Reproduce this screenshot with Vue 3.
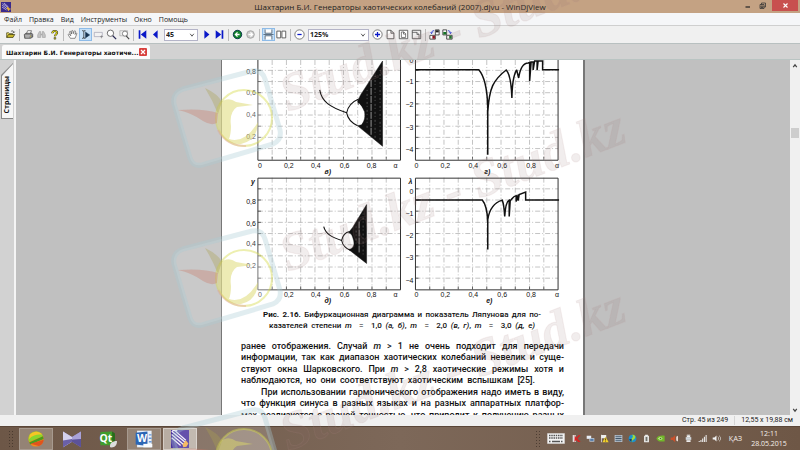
<script setup>
import { ref } from 'vue'

const page = ref('45')
const zoom = ref('125%')
const menus = ['Файл', 'Правка', 'Вид', 'Инструменты', 'Окно', 'Помощь']

// Each icon is a list of [path, fill, stroke, stroke width] on a 26 × 26 grid.
const blue = '#0a18c8'
const ink = '#444'
const icons = {
  open: [
    ['M4 20V9h5l2 2h7v4', '#f3e36a', '#33310a', 1.6],
    ['M4 20l4-7h15l-4 7z', '#c9b82c', '#33310a', 1.6],
    ['M14 6c3-3 6-2 7 2M21 9l-3-2M21 9l2-3', 'none', '#222', 1.4],
  ],
  print: [
    ['M8 12l3-8h9l-3 8', '#fff', '#333', 1.4],
    ['M3 13l4-3h14l2 3v6l-5 3H4z', '#888', '#333', 1.5],
    ['M5 16h12M6 19h9M11 7h6', 'none', '#eee', 1.3],
    ['M17 17h2', 'none', '#dccb23', 2],
  ],
  find: [
    ['M4 20v-6l4-8h3v14zM15 20V6h3l4 8v6z', '#c4c4c4', '#a2a2a2', 1.5],
    ['M11 11h4v4h-4z', '#aaa', 'none', 0],
  ],
  help: [
    ['M8 10c0-7 11-7 11-1 0 4-5 4-5 8', 'none', '#222', 5],
    ['M8 10c0-7 11-7 11-1 0 4-5 4-5 8', 'none', '#e4dc18', 2.6],
    ['M12 20h4v4h-4z', '#d8ce10', '#222', 1.2],
  ],
  hand: [
    ['M8 22l-5-8c-1-2 2-3 3-1l3 3-3-9c0-2 3-2 3 0l2 5V5c0-2 3-2 3 0l1 6 2-6c1-2 3-1 3 1l-1 7 2-3c1-1 3 0 2 2l-4 10z', '#fff', '#444', 1.4],
  ],
  text: [
    ['M5 4h3l1 2 1-2h3M9 6v15M5 22h3l1-2 1 2h3', 'none', '#222', 1.7],
    ['M13 7l10 7-10 7z', '#16324f', '#16324f', 1],
  ],
  marquee: [
    ['M3 8h19v10H3z', '#f2f2f2', '#9a9aac', 1.5],
    ['M20 15v7M17 18h7', 'none', '#777', 1.4],
  ],
  loupe: [
    ['M18 10a7.500 7.500 0 1 1-15 0a7.500 7.500 0 1 1 15 0', '#fff', '#444', 1.8],
    ['M16 16l8 8', 'none', '#2a2a55', 3],
  ],
  loupeArea: [
    ['M2 4h18v12H2z', '#eee', '#999', 1.4],
    ['M20 11a6 6 0 1 1-12 0a6 6 0 1 1 12 0', '#fff', '#555', 1.6],
    ['M17 16l7 8', 'none', '#444', 2.6],
  ],
  first: [['M4 3h4v20H4zM22 3v20L9 13z', blue, 'none', 0]],
  prev: [['M18 3v20L7 13z', blue, 'none', 0]],
  next: [['M8 3v20l12-10z', blue, 'none', 0]],
  last: [['M18 3h4v20h-4zM4 3v20l13-10z', blue, 'none', 0]],
  back: [
    ['M23 13a10 10 0 1 1-20 0a10 10 0 1 1 20 0', '#11832c', '#08304a', 2.2],
    ['M18 13H9M13 8l-5 5 5 5', 'none', '#fff', 3],
  ],
  forward: [
    ['M22 13a9 9 0 1 1-18 0a9 9 0 1 1 18 0', '#c9c9c9', '#a0a0a0', 2],
    ['M8 13h9M13 8l5 5-5 5', 'none', '#fff', 3],
  ],
  continuous: [['M5 1v9h16V1M5 25v-9h16v9M1 13h24', '#fff', '#456', 1.9]],
  facing: [['M2 5h9v16H2zM14 5h9v16h-9z', '#fff', ink, 1.9]],
  minus: [
    ['M24 13a11 11 0 1 1-22 0a11 11 0 1 1 22 0', '#fff', ink, 1.6],
    ['M8 13h10', 'none', blue, 3],
  ],
  plus: [
    ['M24 13a11 11 0 1 1-22 0a11 11 0 1 1 22 0', '#fff', ink, 1.6],
    ['M7 13h12M13 7v12', 'none', blue, 3],
  ],
  sheet: [['M5 3h9l7 7v13H5zM14 3v7h7', '#fff', ink, 1.9]],
  fitWidth: [
    ['M3 3h20v20H3z', '#fff', ink, 1.9],
    ['M8 7h6l4 4v9H8zM13 7v5h5', 'none', ink, 1.6],
  ],
  fitPage: [
    ['M3 3h20v20H3z', '#eee', ink, 1.9],
    ['M3 8h11l5 5v10M14 8v5h5', 'none', ink, 1.6],
  ],
  rotateLeft: [
    ['M15 2h9v12h-9z', '#fff', '#222', 1.8],
    ['M16 3h7v5h-7z', '#222', 'none', 0],
    ['M2 15h13v9H2z', '#fff', '#222', 1.8],
    ['M8 16h6v7H8z', '#8c1420', 'none', 0],
    ['M12 4c-4 0-6 2-6 6M3 8l3 3 3-3', 'none', blue, 1.8],
  ],
  rotateRight: [
    ['M2 2h9v12H2z', '#fff', '#222', 1.8],
    ['M3 7h7v6H3z', '#157425', 'none', 0],
    ['M11 15h13v9H11z', '#fff', '#222', 1.8],
    ['M17 16h6v7h-6z', '#157425', 'none', 0],
    ['M14 4c4 0 6 2 6 6M17 8l3 3 3-3', 'none', blue, 1.8],
  ],
}

const tools = [
  ['open', 'Открыть'], ['|'],
  ['print', 'Печать'], ['find', 'Найти'], ['help', 'Справка'], ['|'],
  ['hand', 'Рука'], ['text', 'Выделение текста', true], ['marquee', 'Выделение области'],
  ['loupe', 'Лупа'], ['loupeArea', 'Увеличить область'], ['|'],
  ['first', 'Первая страница'], ['prev', 'Предыдущая страница'], ['page'],
  ['next', 'Следующая страница'], ['last', 'Последняя страница'], ['|'],
  ['back', 'Назад'], ['forward', 'Вперёд'], ['|'],
  ['continuous', 'Непрерывно', true], ['facing', 'Разворот'], ['|'],
  ['minus', 'Уменьшить'], ['zoom'], ['plus', 'Увеличить'],
  ['sheet', 'Реальный размер'], ['fitWidth', 'По ширине'], ['fitPage', 'По странице'], ['|'],
  ['rotateLeft', 'Повернуть влево'], ['rotateRight', 'Повернуть вправо'],
].map(([id, label, active]) => ({ id, label, active }))

const range = (n) => Array.from({ length: n }, (_, i) => i + 1)

const leftX = [['0', 2], ['0,2', 31], ['0,4', 58], ['0,6', 87], ['0,8', 114], ['α', 138]]
const rightX = [['0', 1], ['0,2', 30], ['0,4', 58], ['0,6', 87], ['0,8', 116], ['α', 142]]
const charts = [
  { x: 257, top: 50, bottom: 160, name: 'в)', nameX: 327, xLabels: leftX, yLabels: [['0,8', 72], ['0,6', 93], ['0,4', 115], ['0,2', 137]], axis: '' },
  { x: 415, top: 50, bottom: 160, name: 'г)', nameX: 487, xLabels: rightX, yLabels: [['0', 61], ['−1', 82], ['−2', 105], ['−3', 128], ['−4', 150]], axis: '' },
  { x: 257, top: 178, bottom: 290, name: 'д)', nameX: 327, xLabels: leftX, yLabels: [['0,8', 202], ['0,6', 224], ['0,4', 245], ['0,2', 267]], axis: 'y' },
  { x: 415, top: 178, bottom: 290, name: 'е)', nameX: 489, xLabels: rightX, yLabels: [['0', 192], ['−1', 214], ['−2', 237], ['−3', 259], ['−4', 282]], axis: 'λ' },
]

const prose = [
  ['ранее отображения.  Случай ', 'm', ' > 1 не очень подходит для передачи'],
  ['информации, так как диапазон хаотических колебаний невелик и суще-'],
  ['ствуют окна Шарковского.  При ', 'm', ' > 2,8 хаотические режимы хотя и'],
  ['наблюдаются, но они соответствуют хаотическим вспышкам [25].'],
  ['При использовании гармонического отображения надо иметь в виду,'],
  ['что функция синуса в разных языках и на разных аппаратных платфор-'],
  ['мах реализуется с разной точностью, что приводит к получению разных'],
]

const apps = [
  { name: 'Браузер', state: 'open', shapes: [
    ['M24 13a11 11 0 1 1-22 0a11 11 0 1 1 22 0', '#f58a1b'],
    ['M2 13C2 6 7 2 13 2c5 0 9 3 10 7L3 17z', '#8bd62d'],
    ['M4 7c5-6 14-6 18 0C16 6 9 7 3 13z', '#f7c526'],
    ['M3 18l20-9 1 4L5 21z', '#4a9a1e'],
    ['M5 20l19-6c0 4-3 8-7 9z', '#e0531c'],
  ] },
  { name: 'Плеер', state: '', shapes: [
    ['M0 2l13 8 13-8v23l-13-8-13 8z', '#8d86c4'],
    ['M0 2l13 8v7L0 25z', '#d4d1ee'],
    ['M0 25V15l13-2v4z', '#6a60a8'],
    ['M26 2v11l-13 1v-4z', '#a9a2d8'],
    ['M26 25V13l-13 1v3z', '#5c5298'],
  ] },
  { name: 'Qt Creator', state: '', text: 'Qt', shapes: [
    ['M2 3l17-1v20H2z', '#3f9d2c'], ['M19 2l4 3v16l-4 1z', '#256e1a'],
    ['M16 25c-1-6 3-9 10-9 0 7-4 10-10 9z', '#ddd'], ['M13 27l8-7', '#aaa'],
  ] },
  { name: 'Word', state: 'open', text: 'W', shapes: [
    ['M3 1h21v24H3z', '#e9f1fb'], ['M1 4l17-2v21L1 21z', '#2b66b5'],
    ['M20 6h4v2h-4zM20 11h4v2h-4zM20 16h4v2h-4z', '#6d9bd6'], ['M12 20h13v5H12z', '#f8fbff'],
  ] },
  { name: 'WinDjView', state: 'current', shapes: [] },
]

const tray = [
  [['M2 3h9v20H2z', '#e0e0e0'], ['M8 3l4 8 8-8h5L16 13l9 10h-7l-6-6-5 6z', '#d52222']],
  [['M2 5h13v9H2z', '#e8eef5'], ['M10 12h14v10H10z', '#c4d3e5'], ['M12 14h10v6H12z', '#557ba6']],
  [['M3 2h2v22H3zM5 3h13v9H5z', '#eee'], ['M16 8l9 16H7z', '#f2cf2a'], ['M15 13h2v6h-2zM15 20h2v2h-2z', '#222']],
  [['M2 3h22v20H2z', '#c7d2dd'], ['M4 5h18v3H4zM4 11h18v4H4zM4 18h18v3H4z', '#43576a']],
  [['M24 13a11 11 0 1 1-22 0a11 11 0 1 1 22 0', '#1c91cf'], ['M12 2c8 0 11 5 8 10s-9 4-8 12c-5-5-5-9-1-12s4-6 1-10z', '#a3da37'], ['M3 16l8-2-1 9z', '#0c3970']],
  [['M9 2h8v3h3v19H6V5h3z', '#eee'], ['M9 8h8v13H9z', '#b0b0a8'], ['M12 9h2v11h-2z', '#555']],
  [['M1 13C6 4 15 4 25 5v17H11C7 21 3 18 1 13z', '#73b72b'], ['M6 13c4-5 9-5 13 0-4 5-9 5-13 0z', '#d8f0b4'], ['M10 13c2-3 5-3 6 0-2 3-4 3-6 0z', '#42820f']],
  [['M2 10h6l7-7v21l-7-7H2z', '#c9502a'], ['M18 8l5-3v17l-5-3z', '#eee0d8']],
  [['M8 2h10v7H8z', '#eee'], ['M5 9h16v8H5z', '#cfd5da'], ['M7 18h12v5H7z', '#f4f4f4'], ['M10 4h2v2h-2zM14 4h2v2h-2z', '#555']],
  [['M2 20h3v3H2zM7 17h3v6H7zM12 13h3v10h-3zM17 8h3v15h-3zM22 3h3v20h-3z', '#eee']],
  [['M2 10h5l6-6v18l-6-6H2z', '#f2f2f2'], ['M16 8c3 3 3 7 0 10l1 1c4-4 4-8 0-12zM20 5c5 5 5 11 0 16l1 1c6-6 6-12 0-18z', '#eee']],
]

const marks = [
  { text: 112, badge: 0 },
  { text: 272, badge: 160 },
  { text: 451, badge: 339 },
]
</script>

<template>
  <div class="window">
    <header class="titlebar">
      <svg class="logo" viewBox="0 0 20 20" aria-hidden="true">
        <path d="M0 0h20v20H0z" fill="#3b2a8c" />
        <path d="M3 3l11 8M2 6l11 8M6 2l9 8M2 10l9 6" stroke="#e6e0ff" stroke-width="1.300" />
        <path d="M12 13l2-3 1 3 4 1-3 1-1 3-1-3z" fill="#ffc22b" stroke="#ffc22b" />
      </svg>
      <h1>Шахтарин Б.И. Генераторы хаотических колебаний (2007).djvu - WinDjView</h1>
      <div class="caption-buttons">
        <button aria-label="Свернуть"><svg viewBox="0 0 14 14"><path d="M3 10h9" stroke="#222" stroke-width="2.400" /></svg></button>
        <button aria-label="Восстановить"><svg viewBox="0 0 14 14"><path d="M2 5h8v8H2zM5 5V2h8v8h-3M4 8h4v3H4z" fill="none" stroke="#333" stroke-width="1.500" /></svg></button>
        <button class="close" aria-label="Закрыть"><svg viewBox="0 0 14 14"><path d="M3 3l8 8M11 3l-8 8" stroke="#fff" stroke-width="2.200" /></svg></button>
      </div>
    </header>

    <nav class="menubar">
      <button v-for="m in menus" :key="m">{{ m }}</button>
    </nav>

    <div class="toolbar">
      <template v-for="(t, i) in tools" :key="i">
        <span v-if="t.id === '|'" class="sep"></span>
        <span v-else-if="t.id === 'page'" class="combo page-combo">
          <select v-model="page" aria-label="Страница"><option>45</option><option>46</option></select>
          <svg viewBox="0 0 10 10"><path d="M2 3l3 4 3-4" fill="none" stroke="#555" stroke-width="1.600" /></svg>
        </span>
        <span v-else-if="t.id === 'zoom'" class="combo zoom-combo">
          <select v-model="zoom" aria-label="Масштаб"><option>125%</option><option>150%</option></select>
          <svg viewBox="0 0 10 10"><path d="M2 3l3 4 3-4" fill="none" stroke="#555" stroke-width="1.600" /></svg>
        </span>
        <button v-else class="tool" :class="{ active: t.active }" :aria-label="t.label">
          <svg viewBox="0 0 26 26">
            <path v-for="(p, k) in icons[t.id]" :key="k" :d="p[0]" :fill="p[1]" :stroke="p[2]" :stroke-width="p[3]" />
          </svg>
        </button>
      </template>
    </div>

    <div class="tabs">
      <div class="tab">
        <button class="tab-name">Шахтарин Б.И. Генераторы хаотиче...</button>
        <button class="tab-close" aria-label="Закрыть вкладку"><svg viewBox="0 0 16 16"><path d="M4 4l8 8M12 4l-8 8" stroke="#fff" stroke-width="2.400" /></svg></button>
      </div>
    </div>

    <main class="workspace">
      <aside class="side">
        <button class="side-tab"><span>Страницы</span></button>
      </aside>
      <div class="viewer">
        <article class="sheet">
          <svg class="figure" viewBox="221 60 362 247" role="img" aria-label="Бифуркационные диаграммы">
            <g v-for="(c, i) in charts" :key="i">
              <g class="grid">
                <path v-for="n in 9" :key="'v' + n" :d="`M${c.x + n * 14.3} ${c.top}V${c.bottom}`" />
                <path v-for="n in 9" :key="'h' + n" :d="`M${c.x} ${c.bottom - n * 11.2}h143`" />
              </g>
              <path class="frame" :d="`M${c.x} ${c.top + 0.5}h143V${c.bottom + 0.5}h-143z`" />
              <path class="ticks" :d="range(9).map(n => `M${c.x + n * 14.3} ${c.bottom}v-3M${c.x} ${c.bottom - n * 11.2}h3`).join('')" />
              <text v-for="l in c.yLabels" :key="l[0]" :x="c.x - 2" :y="l[1] + 2" text-anchor="end">{{ l[0] }}</text>
              <text v-for="l in c.xLabels" :key="l[0]" :x="c.x + l[1]" :y="c.bottom + 8" text-anchor="middle">{{ l[0] }}</text>
              <text class="italic" :x="c.nameX" :y="c.bottom + 14" text-anchor="middle">{{ c.name }}</text>
              <text v-if="c.axis" class="italic" :x="c.x - 5" :y="c.top + 6" text-anchor="middle">{{ c.axis }}</text>
            </g>

            <g class="curve">
              <path d="M319 90c2 12 10 17 27 23M358 99c-7 3-11 8-12 14 1 6 5 10 11 13" />
              <path class="solid" d="M357 101l3-6 22-34v85.500l-25-20.500 4-1c2-3 4-6 3-13-2-4-3-6-6-7z" />
              <path class="hole" d="M358 103c3 2 5 8 5 12s-2 7-5 9" />
              <path class="streak" d="M370.500 80v55" />
              <path class="grain" d="M374.500 76v62M379.500 70v70M366.500 90v38" />

              <path d="M323 227c2 8 9 11 18 14M349 232c-5 1-7 4-8 9 1 5 4 8 9 10" />
              <path class="solid" d="M348 233l4-5 14-23v59l-18-14c5-1 6-5 5-9-1-4-2-7-5-8z" />
              <path class="streak" d="M358.500 222v32" />
              <path class="grain" d="M362.500 214v44M355.500 227v20" />

              <path class="trace" d="M415 69.700H478.500C484 76 487 86 487.500 108V155V112C489 88 493 80 506 70 509 73 511 80 511.700 98 512 82 514 74 516.500 70L518.500 78C520 68 523 63 528 63L529.500 62.500V81L531 62H533V70L534.500 61H537V70L538 61H542.500V69.700H559" />
              <path class="trace" d="M415 200.500H482C485 204 487 210 487.500 222V250V220C489 210 494 203 502 200.500 503 203 504 208 504.500 217 505 208 506 202 509 200.500V217L510 201C512 200 512 197 516 196V202L518 195V201L519 195 525.500 192.500V200.500H559" />
            </g>
          </svg>

          <div class="fig-caption">
            <p><b>Рис. 2.16.</b> Бифуркационная диаграмма и показатель Ляпунова для по-</p>
            <p class="second">казателей степени <i>m</i> &nbsp;=&nbsp; 1,0 <i>(а, б)</i>, <i>m</i> &nbsp;=&nbsp; 2,0 <i>(в, г)</i>, <i>m</i> &nbsp;=&nbsp; 3,0 <i>(д, е)</i></p>
          </div>

          <div class="prose">
            <p v-for="(line, i) in prose" :key="i" :class="{ end: i === 3, indent: i === 4 }">
              <template v-for="(part, k) in line" :key="k"><i v-if="part === 'm'">m</i><template v-else>{{ part }}</template></template>
            </p>
          </div>
        </article>
      </div>
      <div class="scrollbar">
        <button aria-label="Вверх"><svg viewBox="0 0 10 10"><path d="M2 7l3-4 3 4" fill="none" stroke="#444" stroke-width="2" /></svg></button>
        <span class="thumb"></span>
        <button aria-label="Вниз"><svg viewBox="0 0 10 10"><path d="M2 3l3 4 3-4" fill="none" stroke="#444" stroke-width="2" /></svg></button>
      </div>
    </main>

    <footer class="status">
      <span>Стр. 45 из 249</span>
      <span class="size">12,55 x 19,88 см</span>
    </footer>

    <div class="taskbar">
      <span class="grip"></span>
      <div class="apps">
        <button v-for="a in apps" :key="a.name" :class="a.state" :aria-label="a.name">
          <svg v-if="a.state === 'current'" viewBox="0 0 28 28">
            <path d="M0 0h28v28H0z" fill="#4a329e" />
            <path d="M1 2l21 17M1 7l18 15M1 12l14 12M6 1l17 15M2 1l8 0" stroke="#f2effc" stroke-width="2" />
            <path d="M18 22l5-6 4 5-3 5-5 1z" fill="#f5b04a" />
          </svg>
          <svg v-else viewBox="0 0 26 26">
            <path v-for="(s, k) in a.shapes" :key="k" :d="s[0]" :fill="s[1]" />
            <text v-if="a.text" x="10" y="18" text-anchor="middle" fill="#fff" font-size="15" font-weight="700">{{ a.text }}</text>
          </svg>
        </button>
      </div>
      <span class="grip tray-grip"></span>
      <svg class="keyboard" viewBox="0 0 36 22">
        <path d="M1 1h34v20H1z" fill="#f3f3f3" stroke="#ddd" />
        <path d="M4 5h28M4 10h28M4 17h4M28 17h4" stroke="#555" stroke-width="3" stroke-dasharray="3 1.500" />
        <path d="M10 17h16" stroke="#555" stroke-width="3" />
      </svg>
      <div class="tray">
        <svg v-for="(t, i) in tray" :key="i" viewBox="0 0 26 26"><path v-for="(s, k) in t" :key="k" :d="s[0]" :fill="s[1]" /></svg>
      </div>
      <span class="lang">ҚАЗ</span>
      <time class="clock"><span>12:11</span><span>28.05.2015</span></time>
    </div>

    <svg class="watermark" viewBox="0 0 800 450" aria-hidden="true">
      <g v-for="m in marks" :key="m.text">
        <text :transform="`translate(288 ${m.text}) rotate(-21)`">Stud.kz - Stud.kz</text>
        <g :transform="`translate(0 ${m.badge})`">
          <path class="badge" d="M183 89L252 71Q262 69 265 79L280 130Q282 140 273 144L202 165Q193 167 190 158L174 104Q172 93 183 89Z" />
          <circle class="ring" cx="244" cy="118" r="28" />
          <path class="arc" d="M218 130Q226 146 246 146" />
          <path class="bird" d="M220 103Q228 96 236 102L253 105L237 107Q229 112 231 126Q231 134 229 139Q245 144 258 122Q257 141 241 144Q229 145 222 136Q214 122 220 103Z" />
          <path class="wing" d="M178 110Q203 108 218 113L217 123Q211 126 203 121Q192 113 178 110Z" />
          <path class="feather" d="M205 88Q218 94 222 102L218 114Q213 101 205 88Z" />
        </g>
      </g>
    </svg>
  </div>
</template>

<style>
body { margin: 0; }
</style>

<style scoped>
* { box-sizing: border-box; }
.window { position: relative; display: flex; flex-direction: column; height: 100vh; overflow: hidden; font: 7px/9px "Open Sans", "Noto Sans", sans-serif; color: #222; background: #f0f0f0; }
button { display: flex; align-items: center; justify-content: center; padding: 0; border: 0; background: none; font: inherit; color: inherit; white-space: nowrap; }
svg { display: block; flex: none; }
p, h1 { margin: 0; }

.titlebar { display: grid; grid-template-columns: 1fr auto 1fr; align-items: center; height: 13px; background: #c4a283; }
.logo { width: 10px; height: 10px; margin-left: 1px; }
h1 { font-size: 8px; line-height: 13px; font-weight: 400; white-space: nowrap; }
.caption-buttons { display: flex; justify-content: flex-end; align-self: start; padding-right: 2px; }
.caption-buttons button { width: 15px; height: 11px; }
.caption-buttons svg { width: 7px; height: 7px; }
.caption-buttons .close { width: 26px; margin-left: 2px; background: #c8504f; }

.menubar { display: flex; align-items: center; gap: 7px; height: 13px; padding-left: 4px; background: #f5f6f8; border-bottom: 1px solid #cfcfcf; }

.toolbar { display: flex; align-items: center; height: 18px; padding-left: 4px; background: #f0f0f0; border-bottom: 1px solid #b8c0c0; }
.tool { width: 13px; height: 13px; flex: none; }
.tool svg { width: 11px; height: 11px; }
.tool.active { background: #c5e0f8; box-shadow: 0 0 0 1px #8dbbe8 inset; }
.sep { width: 1px; height: 12px; margin: 0 2px; background: #bbb; flex: none; }
.combo { display: grid; align-items: center; height: 12px; background: #fff; border: 1px solid #b4b4c8; }
.combo > * { grid-area: 1 / 1; }
.combo select { width: 100%; height: 10px; padding: 0 1px; border: 0; appearance: none; background: none; font: 700 7px/10px "Open Sans", sans-serif; color: #222; }
.combo svg { width: 6px; height: 6px; margin-right: 2px; justify-self: end; pointer-events: none; }
.page-combo { width: 34px; margin: 0 2px; }
.zoom-combo { width: 61px; margin: 0 2px; }

.tabs { display: flex; align-items: flex-end; height: 16px; padding-left: 2px; background: #d2d2d2; border-bottom: 1px solid #b9c4c2; }
.tab { display: flex; align-items: center; gap: 1px; height: 14px; padding: 0 3px 0 4px; background: #fbfbfb; border-radius: 2px 2px 0 0; }
.tab-name { font: 700 6px/9px "DejaVu Sans", sans-serif; color: #111; }
.tab-close { width: 8px; height: 8px; background: #d8413e; border-radius: 1px; }
.tab-close svg { width: 8px; height: 8px; }

.workspace { display: flex; flex: 1; min-height: 0; }
.side { width: 16px; background: #d2d2d2; border-right: 2px solid #f4f4f4; padding: 3px 0 0 1px; }
.side-tab { position: relative; width: 12px; height: 56px; padding-top: 8px; background: #888; clip-path: polygon(0 12px, 100% 0, 100% 100%, 0 100%); }
.side-tab::before { content: ""; position: absolute; inset: 1px 0 1px 1px; background: #f6f6f6; clip-path: polygon(0 12px, 100% 0, 100% 100%, 0 100%); }
.side-tab span { position: relative; writing-mode: vertical-rl; transform: rotate(180deg); font-weight: 700; font-size: 7px; line-height: 10px; color: #111; }
.viewer { display: flex; flex: 1; justify-content: center; overflow: hidden; background: #c0c0c0; }
.sheet { width: 47%; min-width: 364px; background: #fff; border: solid #777; border-width: 0 2px 0 1px; }
.figure { width: 100%; }
.figure text { font: 7px "Liberation Sans", sans-serif; fill: #111; }
.figure text.italic { font-style: italic; font-weight: 700; }
.grid path { stroke: #aaa; stroke-width: 0.7; stroke-dasharray: 5 2 1 2; fill: none; }
.frame { fill: none; stroke: #333; stroke-width: 1; }
.ticks { stroke: #333; stroke-width: 0.7; }
.curve path { fill: none; stroke: #111; stroke-width: 1.1; stroke-linejoin: round; }
.curve .solid { fill: #111; stroke-width: 0.5; }
.curve .hole { fill: #fff; stroke: none; }
.curve .streak { stroke: #ccc; stroke-width: 0.7; stroke-dasharray: 7 1; }
.curve .grain { stroke: #777; stroke-width: 0.6; stroke-dasharray: 1 3 2 2; }
.curve .trace { stroke-width: 1.5; stroke-linejoin: miter; stroke-miterlimit: 2; }

.fig-caption { margin-top: 3px; padding: 0 42px 0 41px; font: 500 8px/11px Roboto, sans-serif; color: #111; }
.fig-caption p { text-align-last: justify; white-space: nowrap; }
.fig-caption .second { padding: 0 6px; }
.prose { margin-top: 10px; padding: 0 19px; font: 500 9px/11px Roboto, sans-serif; color: #111; }
.prose p { text-align-last: justify; white-space: nowrap; }
.prose p:nth-child(even) { margin-bottom: 1px; }
.prose .end { padding-right: 29px; }
.prose .indent { padding-left: 20px; }

.scrollbar { display: flex; flex-direction: column; width: 10px; background: #f0f0f0; }
.scrollbar button { height: 11px; }
.scrollbar svg { width: 6px; height: 6px; }
.thumb { height: 10px; margin: 57px 1px auto; background: #cdcdcd; }

.status { display: flex; align-items: center; justify-content: flex-end; gap: 6px; height: 11px; padding-right: 7px; background: #f0f0f0; font-family: Roboto, sans-serif; }
.size { padding-left: 6px; border-left: 1px solid #d5d5d5; }

.taskbar { display: flex; align-items: center; height: 24px; background: linear-gradient(90deg, #6d5747, #7d6859 50%, #6e5746); border-top: 1px solid #5a4638; color: #f5f0ec; }
.grip { width: 6px; height: 18px; margin: 0 5px 0 8px; background: radial-gradient(circle, #3a2d24 1px, transparent 1px) 0 0 / 3px 3px; opacity: 0.7; }
.apps { display: flex; gap: 2px; flex: 1; }
.apps button { width: 34px; height: 22px; }
.apps .open { background: #948375; box-shadow: 0 0 0 1px #a79a8f inset; }
.apps .current { background: #b8ada3; box-shadow: 0 0 0 1px #d5cdc6 inset; }
.apps svg { width: 18px; height: 18px; }
.apps text { font-family: "Open Sans", sans-serif; }
.tray-grip { margin: 0 6px 0 0; }
.keyboard { width: 18px; height: 11px; margin-right: 5px; }
.tray { display: flex; gap: 5px; margin-left: 2px; }
.tray svg { width: 9px; height: 9px; }
.lang { margin-left: 8px; }
.clock { display: flex; flex-direction: column; align-items: center; gap: 1px; margin: 0 13px 0 9px; width: 36px; white-space: nowrap; }

.watermark { position: absolute; inset: 0; width: 100%; height: 100%; pointer-events: none; }
.watermark text { font: italic 700 53px "Liberation Serif", serif; fill: #8c6c6c; fill-opacity: 0.12; stroke: #c09090; stroke-opacity: 0.12; }
.badge { fill: #fff; fill-opacity: 0.15; stroke: #a8ccd4; stroke-opacity: 0.35; stroke-width: 5; }
.ring { fill: #fff; fill-opacity: 0.2; stroke: #d8dc50; stroke-opacity: 0.45; stroke-width: 2; }
.arc { fill: none; stroke: #e0a0a0; stroke-opacity: 0.4; stroke-width: 2; }
.bird { fill: #dbd86a; fill-opacity: 0.5; }
.wing { fill: #c87868; fill-opacity: 0.35; }
.feather { fill: #aaa050; fill-opacity: 0.35; }
</style>
